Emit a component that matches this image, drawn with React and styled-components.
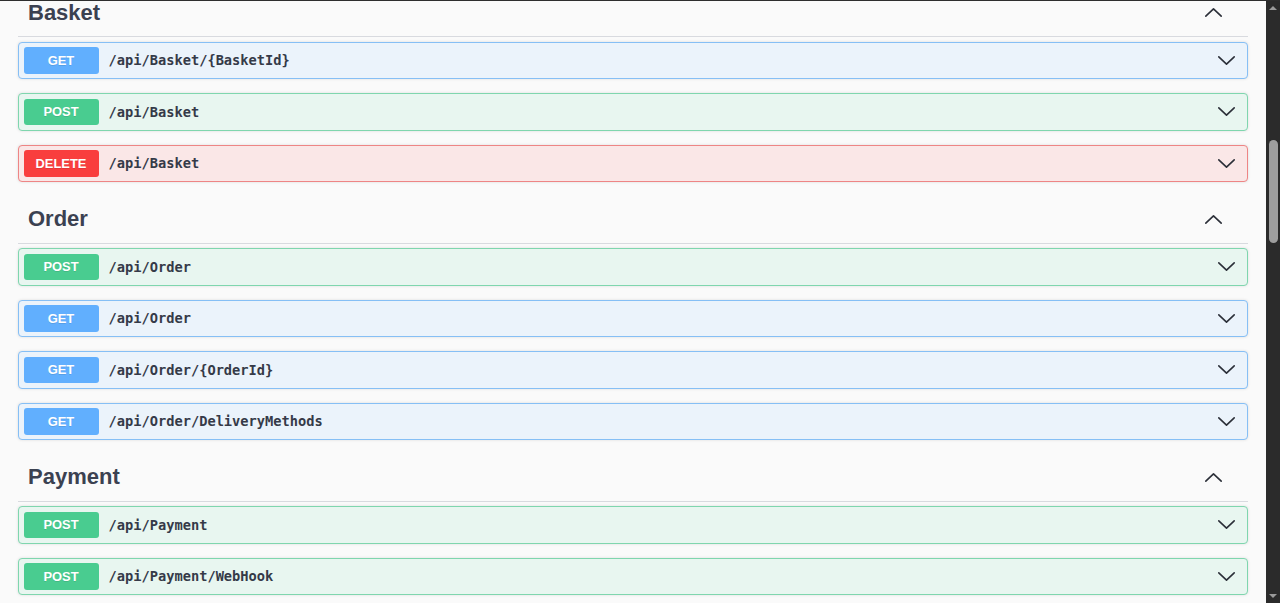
import React from "react";
import styled, { createGlobalStyle, css } from "styled-components";

const GlobalStyle = createGlobalStyle`
  html, body {
    margin: 0;
    padding: 0;
    background: #fafafa;
  }
  body {
    overflow: hidden;
  }
`;

const METHODS = {
  GET: { badge: "#61affe", bg: "#ebf3fb", border: "#86bff5" },
  POST: { badge: "#49cc90", bg: "#e8f6f0", border: "#7fd6ae" },
  DELETE: { badge: "#f93e3e", bg: "#fae7e7", border: "#ee8585" },
};

const sections = [
  {
    name: "Basket",
    ops: [
      { method: "GET", path: "/api/Basket/{BasketId}" },
      { method: "POST", path: "/api/Basket" },
      { method: "DELETE", path: "/api/Basket" },
    ],
  },
  {
    name: "Order",
    ops: [
      { method: "POST", path: "/api/Order" },
      { method: "GET", path: "/api/Order" },
      { method: "GET", path: "/api/Order/{OrderId}" },
      { method: "GET", path: "/api/Order/DeliveryMethods" },
    ],
  },
  {
    name: "Payment",
    ops: [
      { method: "POST", path: "/api/Payment" },
      { method: "POST", path: "/api/Payment/WebHook" },
    ],
  },
];

const Frame = styled.div`
  display: flex;
  width: 1280px;
  height: 603px;
  box-sizing: border-box;
  border-top: 1px solid #2e2e2e;
  overflow: hidden;
  background: #fafafa;
`;

const Main = styled.main`
  flex: 1;
  min-width: 0;
  padding: 0 18px;
  overflow: hidden;
`;

/* content is scrolled slightly past the top of the first tag */
const ScrollContent = styled.div`
  margin-top: -11.5px;
`;

const Section = styled.section`
  display: flex;
  flex-direction: column;
`;

const TagHeader = styled.h3`
  display: flex;
  align-items: center;
  justify-content: space-between;
  height: 46.5px;
  margin: 0 0 4.5px;
  padding: 0 26px 0 10px;
  border-bottom: 1px solid #d8dadf;
  font-family: "Liberation Sans", Arial, sans-serif;
  font-size: 22px;
  font-weight: 700;
  color: #3b4151;
`;

const ToggleIcon = styled.svg`
  display: block;
  width: 17px;
  height: 9px;
  overflow: visible;
  ${({ $up }) =>
    $up &&
    css`
      transform: rotate(180deg);
    `}
`;

const Chevron = ({ up }) => (
  <ToggleIcon $up={up} viewBox="0 0 17 9">
    <polyline
      points="0.8,0.8 8.5,8.2 16.2,0.8"
      fill="none"
      stroke="#2b2f38"
      strokeWidth="1.6"
      strokeLinecap="round"
      strokeLinejoin="round"
    />
  </ToggleIcon>
);

const OpBlock = styled.div`
  display: flex;
  align-items: center;
  height: 37.5px;
  box-sizing: border-box;
  margin-bottom: 14px;
  padding: 0 12px 0 4.5px;
  border: 1px solid ${({ $m }) => METHODS[$m].border};
  border-radius: 4px;
  background: ${({ $m }) => METHODS[$m].bg};
  box-shadow: 0 0 3px rgba(0, 0, 0, 0.12);
`;

const MethodBadge = styled.span`
  display: flex;
  align-items: center;
  justify-content: center;
  flex: none;
  width: 75px;
  height: 26.5px;
  border-radius: 3px;
  background: ${({ $m }) => METHODS[$m].badge};
  color: #fff;
  font-family: "Liberation Sans", Arial, sans-serif;
  font-size: 12.9px;
  font-weight: 700;
  text-shadow: 0 1px 0 rgba(0, 0, 0, 0.1);
`;

const PathText = styled.span`
  flex: 1;
  margin-left: 10px;
  font-family: "DejaVu Sans Mono", "Liberation Mono", monospace;
  font-size: 13.7px;
  font-weight: 700;
  color: #353a48;
`;

const ScrollTrack = styled.div`
  position: relative;
  flex: none;
  width: 14px;
  background: #2b2b2b;
`;

const ScrollArrow = styled.span`
  position: absolute;
  left: 3px;
  width: 0;
  height: 0;
  border-left: 4px solid transparent;
  border-right: 4px solid transparent;
  ${({ $down }) =>
    $down
      ? css`
          bottom: 5px;
          border-top: 4px solid #9a9a9a;
        `
      : css`
          top: 5px;
          border-bottom: 4px solid #9a9a9a;
        `}
`;

const ScrollThumb = styled.div`
  position: absolute;
  left: 2.5px;
  width: 9px;
  border-radius: 5px;
  background: #9e9e9e;
`;

const Operation = ({ method, path }) => (
  <OpBlock $m={method}>
    <MethodBadge $m={method}>{method}</MethodBadge>
    <PathText>{path}</PathText>
    <Chevron />
  </OpBlock>
);

export default function App() {
  const thumb = { top: 139, height: 103 };
  return (
    <>
      <GlobalStyle />
      <Frame>
        <Main>
          <ScrollContent>
            {sections.map((s) => (
              <Section key={s.name}>
                <TagHeader>
                  <span>{s.name}</span>
                  <Chevron up />
                </TagHeader>
                {s.ops.map((op, i) => (
                  <Operation key={i} method={op.method} path={op.path} />
                ))}
              </Section>
            ))}
          </ScrollContent>
        </Main>
        <ScrollTrack>
          <ScrollArrow />
          <ScrollThumb style={{ top: thumb.top, height: thumb.height }} />
          <ScrollArrow $down />
        </ScrollTrack>
      </Frame>
    </>
  );
}
